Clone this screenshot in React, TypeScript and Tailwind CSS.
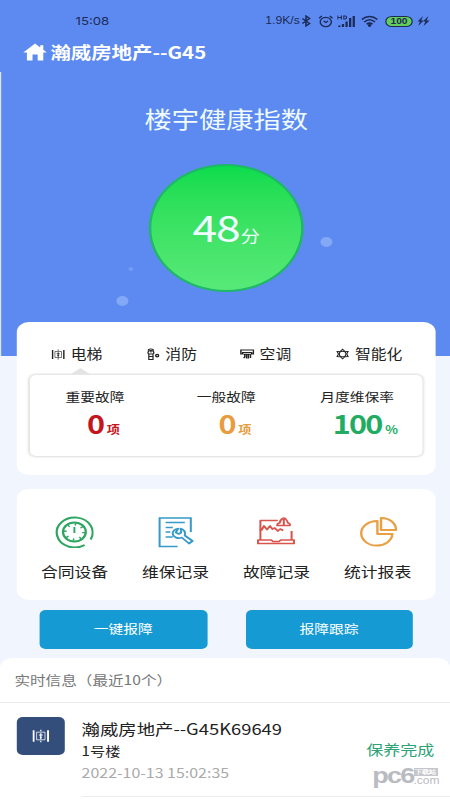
import React from "react";

const FONT = "font-['Noto_Sans_CJK_SC','Noto_Sans',sans-serif]";

const ElevatorIcon = ({ className }: { className?: string }) => (
  <svg className={className} viewBox="0 0 22 20" fill="none" stroke="currentColor">
    <path d="M1.5 1v18M20.5 1v18" strokeWidth="2.6" />
    <path d="M5.5 4h11v12h-11z" strokeWidth="1.1" />
    <path d="M11 5.500v10M8.500 8.500h5M9.500 12h3M11 0v2.500M11 17.500V20" strokeWidth="1.6" />
  </svg>
);

const FireIcon = () => (
  <svg className="h-[13px] w-[11px]" viewBox="0 0 22 26" fill="none" stroke="currentColor" strokeWidth="2">
    <path d="M2.500 10c0-3 2-5 5-5s5 2 5 5L11 12v11H4V12zM4 12h7M3 5c0-4 9-4 9 0M4 17h7M7.500 5v4" />
    <circle cx="18" cy="15" r="2.500" strokeWidth="2.500" />
  </svg>
);

const AirIcon = () => (
  <svg className="h-[11px] w-[12px]" viewBox="0 0 24 22" fill="none" stroke="currentColor" strokeWidth="2.400">
    <path d="M1.500 2h21v8h-3V7h-15v3h-3zM6 10.500h12M8 11v5l-2 2M11 11v8M14 11v8M17.500 11v7" />
  </svg>
);

const SmartIcon = () => (
  <svg className="h-[12px] w-[11px]" viewBox="0 0 24 24" fill="none" stroke="currentColor" strokeWidth="2">
    <path d="M12 1.500 16 6l6 .5-2.500 5.500 2.500 5.500-6 .5-4 4.500L8 18l-6-.5L4.500 12 2 6.500 8 6z" />
    <circle cx="12" cy="12" r="6" />
  </svg>
);

const tabs = [
  { label: "电梯", icon: <ElevatorIcon className="h-[11px] w-[11px]" />, box: "w-[78.800px]" },
  { label: "消防", icon: <FireIcon />, box: "w-[78.500px]" },
  { label: "空调", icon: <AirIcon />, box: "w-[79.500px]" },
  { label: "智能化", icon: <SmartIcon />, box: "" },
];

const stats = [
  { label: "重要故障", value: "0", unit: "项", color: "text-[#c4161c]", box: "w-[109.500px]", pad: "pl-[18px]" },
  { label: "一般故障", value: "0", unit: "项", color: "text-[#e89c40]", box: "w-[102.800px]", pad: "pl-[18px]" },
  { label: "月度维保率", value: "100", unit: "%", color: "text-[#22ac62]", box: "", pad: "pl-[10.500px]" },
];

const menus = [
  {
    label: "合同设备",
    icon: (
      <svg className="h-8 w-8" viewBox="0 0 32 32" fill="none" stroke="#2da661">
        <path d="M24.500 29.500A15 15 0 1 1 29.500 24" transform="translate(0 -.5)" strokeWidth="1.900" />
        <circle cx="16" cy="16" r="9.500" strokeWidth="1.900" />
        <circle cx="16" cy="16" r="7.600" strokeWidth="2.400" strokeDasharray="1.300 4.669" />
        <path d="M16 11v6" strokeWidth="1.600" />
      </svg>
    ),
  },
  {
    label: "维保记录",
    icon: (
      <svg className="h-8 w-8" viewBox="0 0 32 32" fill="none" stroke="#369ac8" strokeWidth="1.700">
        <path d="M18 30.500H3V2h26v14M8 6.500h16M8 11.500h6M8 16h4M8 21h6" />
        <path d="M18.500 12.500c-3 .5-5 3-4.500 5.500.5 3.500 4.500 5 7.500 3.500l6 6 3-2.500-6.500-5.500c1-3-.5-6-3.500-7l.5 4-2 1.500-2.500-1.500z" strokeLinejoin="round" />
      </svg>
    ),
  },
  {
    label: "故障记录",
    icon: (
      <svg className="h-8 w-8" viewBox="0 0 32 32" fill="none" stroke="#d9544d" strokeWidth="1.700" strokeLinejoin="round">
        <path d="M17.500 4.500H3V24M29 15v9M1 24h11l1.500 1.500h5L20 24h11v3.500H1zM2 14h2l2-4 2.500 3.500L11 10l2 3 2-1 2.500 3 2-2 2.500 1.500" />
        <path d="M17 9.500c0-2 1-2.500 2-2.500.5-3 2.500-5 3.500-5s2.500 2 3.500 5c1.500.500 2 1 1.500 2.500zM22.500 3v6" />
      </svg>
    ),
  },
  {
    label: "统计报表",
    icon: (
      <svg className="h-8 w-8" viewBox="0 0 32 32" fill="none" stroke="#e8a044" strokeWidth="2" strokeLinejoin="round">
        <path d="M15.500 5v13H28A13 12.300 0 1 1 15.500 5z" />
        <path d="M18.500 2v12H31A12 12 0 0 0 18.500 2z" />
      </svg>
    ),
  },
];

function StatusBar() {
  return (
    <div className="flex h-8 items-center pt-[10px] pl-[63px] text-[#1d2b57]">
      <span className="w-[158px] font-['Inter',sans-serif] text-[11px] leading-none">15:08</span>
      <span className="w-[30px] font-['Liberation_Sans',sans-serif] text-[10.200px] leading-none">1.9K/s</span>
      <svg className="h-3 w-[9px]" viewBox="0 0 9 12" fill="none" stroke="currentColor" strokeWidth="1.300">
        <path d="m1 3.500 6 5-3 2.500V1l3 2.500-6 5" />
      </svg>
      <svg className="ml-[4.500px] h-[13px] w-[13px]" viewBox="0 0 14 14" fill="none" stroke="currentColor" strokeWidth="1.300">
        <circle cx="7" cy="7.500" r="5" />
        <path d="M1 3.500 3.500 1M13 3.500 10.500 1M5 6.500l2 1.500 2-1.500" />
      </svg>
      <svg className="ml-[3.500px] h-3 w-[15px]" viewBox="0 0 15 12" fill="none" stroke="currentColor" strokeWidth="1.900">
        <path d="M1.800 12v-1.500M4.800 12V9M7.800 12V6.500M10.800 12V3M13.800 12V1" />
        <path d="M.5.500v4M3.500.500v4M.5 2.500h3M5.500 1v3h1.200c1.500 0 1.500-3 0-3z" strokeWidth=".9" />
      </svg>
      <svg className="ml-[5px] h-3 w-[14px]" viewBox="0 0 14 12" fill="none" stroke="currentColor" strokeWidth="1.500">
        <path d="M.5 4.500c4-4 9-4 13 0M2.500 7c3-3 6-3 9 0M4.500 9.200c1.700-1.500 3.300-1.500 5 0" />
        <circle cx="7" cy="10.500" r=".7" />
      </svg>
      <span className="ml-[6px] flex h-[11px] w-[23px] items-center justify-center rounded-full border border-[#1d2b57] bg-[#63cf58] font-['Liberation_Sans',sans-serif] text-[8.500px] leading-none font-bold">
        100
      </span>
      <svg className="ml-1 h-[10px] w-[10px]" viewBox="0 0 10 10" fill="currentColor">
        <path d="M4.500 0 0 5.500h2L.5 10 5 4.500H3zM9 0 4.500 5.500h2L5 10l5-5.500H7.500z" />
      </svg>
    </div>
  );
}

function HealthScore() {
  return (
    <div className="relative flex flex-col items-center pl-px text-[#effbff]">
      <h2 className="mt-[31px] h-8 text-[22.700px] leading-8">楼宇健康指数</h2>
      <div className="mt-[29px] flex h-32 w-[129px] items-baseline justify-center rounded-[50%] border-2 border-[#1fb768] bg-linear-to-b from-[#08dc4d] to-[#57e978] pt-[35px]">
        <span className="text-[37px] leading-[50px] tracking-[-1px]">48</span>
        <span className="ml-px text-[16px]">分</span>
      </div>
      <span className="absolute top-[165px] left-[265.500px] h-[10px] w-[10px] rounded-full bg-[#82a8f6]" />
      <span className="absolute top-[224px] left-[95.500px] h-[10px] w-[10px] rounded-full bg-[#82a8f6]" />
      <span className="absolute top-[195px] left-[106px] h-[4px] w-[4px] rounded-full bg-[#759df5]" />
    </div>
  );
}

function FaultCard() {
  return (
    <section className="mr-3 ml-[14px] h-[153px] rounded-[10px] bg-white pt-[22px] text-[#222]">
      <div className="flex h-5 items-center pl-[29px]">
        {tabs.map((tab) => (
          <div key={tab.label} className={`flex items-center ${tab.box}`}>
            <span className="flex w-4 shrink-0">{tab.icon}</span>
            <span className="text-[13.200px] leading-5 whitespace-nowrap">{tab.label}</span>
          </div>
        ))}
      </div>
      <svg className="mt-[4px] ml-[45px] h-[6px] w-[16px]" viewBox="0 0 16 6" fill="#e4e4e4">
        <path d="M8 0l8 6H0z" />
      </svg>
      <div className="mr-[10px] ml-[10px] flex h-[83px] rounded-md border border-[#e6e6e6] pt-[12px] pl-[29.500px] shadow-[0_0_2px_#ddd]">
        {stats.map((s) => (
          <div key={s.label} className={s.box}>
            <div className="text-[12.300px] leading-5">{s.label}</div>
            <div className={`flex items-baseline font-bold ${s.color} ${s.pad}`}>
              <span className="text-[25.500px] leading-[31px] tracking-[-1.500px]">{s.value}</span>
              <span className="ml-[3px] text-[11px] leading-4">{s.unit}</span>
            </div>
          </div>
        ))}
      </div>
    </section>
  );
}

function MenuCard() {
  return (
    <section className="mt-[14px] mr-3 ml-[14px] flex h-[111px] rounded-[10px] bg-white pt-[27px] pl-[6px] text-[#222]">
      {menus.map((m) => (
        <div key={m.label} className="flex w-[84.200px] flex-col items-center">
          {m.icon}
          <span className="mt-[13px] text-[14px] leading-5">{m.label}</span>
        </div>
      ))}
    </section>
  );
}

function Messages() {
  return (
    <section className="mt-[9px] h-[142px] rounded-t-[10px] bg-white">
      <h3 className="h-[45px] border-b border-[#ececec] pl-[12px] text-[13px] leading-[43px] text-[#777]">实时信息（最近10个）</h3>
      <div className="flex pl-[14px]">
        <div className="mt-[14px] flex h-[38px] w-10 items-center justify-center rounded-[5px] bg-[#344e7c] text-white">
          <ElevatorIcon className="h-[14px] w-[14px]" />
        </div>
        <div className="ml-[14px] flex h-[94px] flex-1 border-b border-[#ececec] pt-[13px]">
          <div className="flex-1 whitespace-nowrap">
            <div className="text-[15.300px] leading-6 text-[#222]">瀚威房地产--G45K69649</div>
            <div className="text-[12.700px] leading-[22px] text-[#222]">1号楼</div>
            <div className="text-[13.300px] leading-[22px] text-[#aaa]">2022-10-13 15:02:35</div>
          </div>
          <div className="relative mr-[13px] pt-[21px] text-[14.200px] leading-6 text-[#2da273]">
            保养完成
            <div className="absolute top-[46px] left-[5px] flex font-['Liberation_Sans',sans-serif] font-bold text-[#b9bbc1]">
              <span className="text-[22.500px] leading-7 tracking-[-1.500px]">pc6</span>
              <span className="flex flex-col pt-[6px]">
                <span className="h-[8px] w-[20px] bg-[#c5c6cb] text-center text-[6px] leading-[8px] whitespace-nowrap text-white">下载站</span>
                <span className="text-[10px] leading-[10px] font-normal">.com</span>
              </span>
            </div>
          </div>
        </div>
      </div>
    </section>
  );
}

export default function App() {
  return (
    <div className="h-[800px] w-[450px] overflow-hidden bg-[#f1f5fe]">
      {/* Page is designed on a 375px grid and stretched to the screen width */}
      <div className={`h-[800px] w-[375px] origin-top-left scale-x-[1.2] ${FONT}`}>
        <header className="h-[356px] bg-[#5c8af0]">
          <StatusBar />
          <div className="flex h-10 items-center pl-[18.500px] text-white">
            <svg className="mr-[3px] h-5 w-[20.500px]" viewBox="0 0 24 22" fill="currentColor">
              <path d="M12 1 .5 11.500H4V21h5.500v-7h5v7H20v-9.500h3.500L20 8.300V3h-3v2.600z" />
            </svg>
            <h1 className="text-[17px] leading-6 font-bold">瀚威房地产--G45</h1>
          </div>
          <div className="h-[284px] border-l border-[#dce6ff]">
            <HealthScore />
          </div>
        </header>
        <main className="-mt-[34px]">
          <FaultCard />
          <MenuCard />
          <div className="mt-[10px] flex gap-8 pl-[33px] text-[12.300px] text-white">
            <button className="h-[39px] w-[139.500px] rounded-[5px] bg-[#159ad3]">一键报障</button>
            <button className="h-[39px] w-[139.500px] rounded-[5px] bg-[#159ad3]">报障跟踪</button>
          </div>
          <Messages />
        </main>
      </div>
    </div>
  );
}
